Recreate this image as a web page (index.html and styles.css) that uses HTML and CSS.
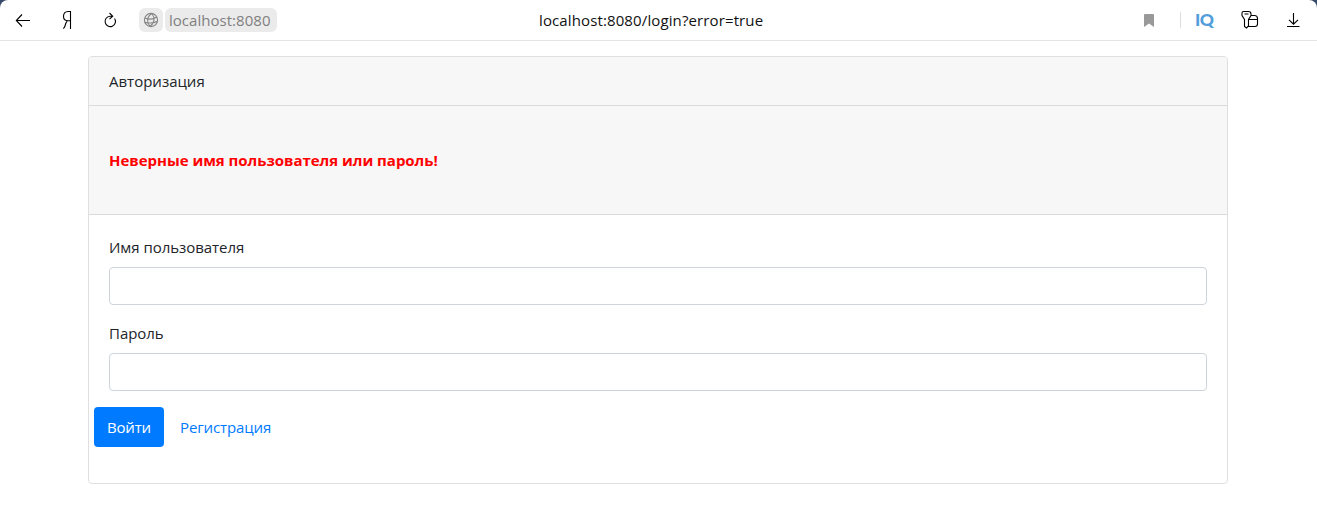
FILE: index.html
```html
<!DOCTYPE html>
<html lang="ru">
<head>
<meta charset="utf-8">
<title>Авторизация</title>
<link rel="stylesheet" href="styles.css">
</head>
<body>
<div class="backdrop">
<header class="toolbar">
  <div class="nav">
    <svg class="icon back" width="16" height="16" viewBox="0 0 16 16"><path d="M15 8.500H1.500M7 2.500 1.300 8.500 7 14.500"/></svg>
    <svg class="icon brand" width="12" height="20" viewBox="0 0 12 20"><path d="M9.500 19V1.500H7C4 1.500 2.500 3.500 2.500 6.200C2.500 9 4 10.800 7 10.800H9.500M6.300 10.800C5 12 4.500 14 4 16C3.600 17.500 3 18.500 2 18.500"/></svg>
    <svg class="icon reload" width="14" height="16" viewBox="0 0 14 16"><path d="M11.600 6.500A5.200 5.200 0 1 1 7 4.200H9.500M6.500 1 9.700 4.200 6.500 7.200"/></svg>
  </div>
  <div class="site">
    <span class="globe"><svg class="icon" width="16" height="16" viewBox="0 0 16 16"><circle cx="8" cy="8" r="6.600"/><path d="M8.800 1.500C3.500 5 3.500 10 7 14.500M8.800 1.500C12.500 6 11.500 11 7 14.500M1.800 6C6 7.800 10 7.500 13.800 5M1.700 10.200C6 11.500 10.500 11.300 14.300 9.200"/></svg></span>
    <span class="host">localhost:8080</span>
  </div>
  <div class="url">localhost:8080/login?error=true</div>
  <div class="tools">
    <svg class="bookmark" width="10" height="13" viewBox="0 0 10 13"><path d="M0 1Q0 0 1 0H9Q10 0 10 1V13L5 9.500 0 13Z"/></svg>
    <span class="divider"></span>
    <span class="iq">IQ</span>
    <svg class="icon keys" width="20" height="20" viewBox="0 0 20 20"><path d="M3.500 1.500H8.500Q11 1.500 11 4V5.500L8.500 9.500V16L6.500 18 4.500 16.500V9.500L2 5.500V3Q2 1.500 3.500 1.500M4.500 4H8.500M11 5.500H14.500Q17.500 5.500 17.500 8.500V14Q17.500 16.500 15 16.500H8.500M9 9.500H17.500"/></svg>
    <svg class="icon download" width="14" height="16" viewBox="0 0 14 16"><path d="M7.500 1V12M3 7.800 7.500 12.200 12 7.800M1 14.500H13.500"/></svg>
  </div>
</header>
</div>
<main class="card">
  <div class="card-title">Авторизация</div>
  <div class="card-alert">Неверные имя пользователя или пароль!</div>
  <form class="card-body">
    <label class="label" for="user">Имя пользователя</label>
    <input class="field" id="user" type="text">
    <label class="label" for="pass">Пароль</label>
    <input class="field" id="pass" type="password">
    <div class="actions">
      <button class="submit" type="button">Войти</button>
      <a class="register">Регистрация</a>
    </div>
  </form>
</main>
</body>
</html>
```
FILE: styles.css
```css
* { box-sizing: border-box; }
body {
  margin: 0;
  background: #fff;
  color: #212529;
  font: 15px/24px "Open Sans", "Noto Sans", sans-serif;
}
.backdrop { background: #35496b; }
.toolbar {
  display: flex;
  height: 41px;
  align-items: center;
  padding-bottom: 1px;
  background: #fff;
  border-bottom: 1px solid #e5e5e5;
  border-radius: 8px 8px 0 0;
}
.icon { display: block; fill: none; stroke: #000; stroke-width: 1.1; }
.nav { display: flex; align-items: center; width: 139px; padding-left: 15px; }
.brand { margin-left: 30px; }
.reload { margin-left: 30px; }
.site { display: flex; gap: 2px; width: 400px; }
.globe, .host { height: 24px; background: #ebebeb; border-radius: 6px; }
.globe { width: 24px; padding: 4px; }
.globe .icon { stroke: #858585; }
.host { width: 112px; padding-left: 4px; color: #808080; line-height: 24px; letter-spacing: 0.03px; }
.url { flex: 1; padding-top: 1px; color: #111; letter-spacing: 0.12px; }
.tools { display: flex; align-items: center; width: 173px; padding-left: 0; }
.bookmark { margin-top: 1px; fill: #999; }
.divider { width: 1px; height: 16px; margin-left: 26px; background: #ddd; }
.iq {
  width: 20px;
  margin-left: 14px;
  color: #529edb;
  font: 900 17.5px/22px Lato, sans-serif;
  letter-spacing: -0.5px;
}
.keys { margin-left: 25px; }
.download { margin-left: 26px; }
.card {
  width: 1140px;
  height: 428px;
  margin: 15px 0 0 88px;
  border: 1px solid #dfdfdf;
  border-radius: 4px;
  overflow: hidden;
}
.card-title, .card-alert { background: #f7f7f7; border-bottom: 1px solid #dadada; padding-left: 20px; }
.card-title { height: 49px; padding-top: 12px; }
.card-alert { height: 109px; padding-top: 42px; color: #f00; font-weight: 700; letter-spacing: -0.02px; }
.card-body { padding: 20px; }
.label { display: block; margin-bottom: 8px; letter-spacing: -0.04px; }
.field {
  display: block;
  width: 100%;
  height: 38px;
  margin-bottom: 16px;
  border: 1px solid #ced4da;
  border-radius: 4px;
}
.actions { display: flex; align-items: center; gap: 16px; margin-left: -15px; }
.submit {
  width: 70px;
  height: 40px;
  padding: 0 0 0 13px;
  border: 0;
  border-radius: 4px;
  background: #007bff;
  color: #fff;
  font: inherit;
  letter-spacing: -0.2px;
  text-align: left;
}
.register { color: #007bff; letter-spacing: -0.12px; }
```
